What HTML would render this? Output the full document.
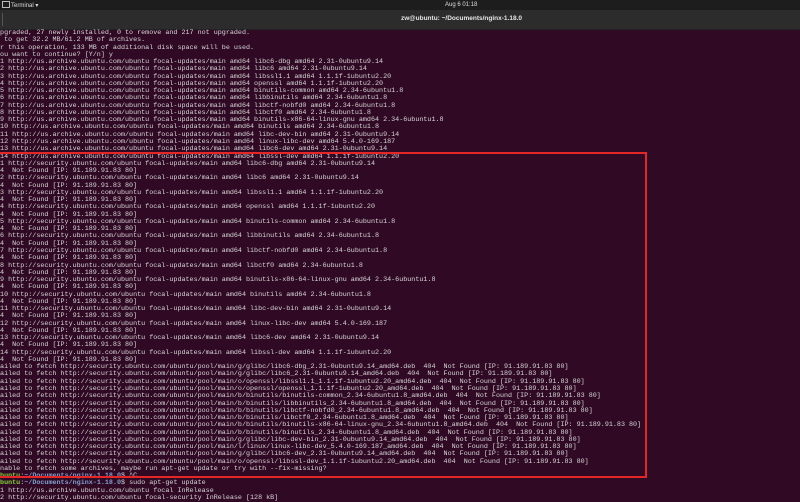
<!DOCTYPE html>
<html><head><meta charset="utf-8"><style>
html,body{margin:0;padding:0;width:800px;height:500px;overflow:hidden;background:#300a24;}
#top{position:absolute;left:0;top:0;width:800px;height:10px;background:#1d1d1d;color:#ddd;font:6px "Liberation Sans",sans-serif;}
#title{position:absolute;left:0;top:10px;width:800px;height:19px;background:#2c2c2c;border-bottom:1px solid #222;color:#e6e6e6;font:bold 6.5px "Liberation Sans",sans-serif;}
#term{position:absolute;left:0;top:30px;width:800px;}
pre{margin:0 0 0 -16.1px;font-family:"Liberation Mono",monospace;font-size:6.72px;line-height:7.27px;color:#d6d6d6;white-space:pre;}
.g{color:#7fd63a;font-weight:bold}.b{color:#7f9fd0;font-weight:bold}
#box{position:absolute;left:-2px;top:152px;width:645px;height:322px;border:2px solid #e32626;}
</style></head><body>
<div id="top"><span style="position:absolute;left:2px;top:1px;width:6px;height:5px;border:1px solid #bbb"></span><span style="position:absolute;left:11px;top:1.5px">Terminal ▾</span><span style="position:absolute;left:445px;top:1.5px">Aug 6  01:18</span></div>
<div id="title"><span style="position:absolute;left:2px;top:3px;width:1px;height:13px;background:#555"></span><span style="position:absolute;left:401px;top:5px">zw@ubuntu: ~/Documents/nginx-1.18.0</span></div>
<div id="term"><pre>10 upgraded, 27 newly installed, 0 to remove and 217 not upgraded.
Need to get 32.2 MB/61.2 MB of archives.
After this operation, 133 MB of additional disk space will be used.
Do you want to continue? [Y/n] y
Get:1 http://us.archive.ubuntu.com/ubuntu focal-updates/main amd64 libc6-dbg amd64 2.31-0ubuntu9.14
Get:2 http://us.archive.ubuntu.com/ubuntu focal-updates/main amd64 libc6 amd64 2.31-0ubuntu9.14
Get:3 http://us.archive.ubuntu.com/ubuntu focal-updates/main amd64 libssl1.1 amd64 1.1.1f-1ubuntu2.20
Get:4 http://us.archive.ubuntu.com/ubuntu focal-updates/main amd64 openssl amd64 1.1.1f-1ubuntu2.20
Get:5 http://us.archive.ubuntu.com/ubuntu focal-updates/main amd64 binutils-common amd64 2.34-6ubuntu1.8
Get:6 http://us.archive.ubuntu.com/ubuntu focal-updates/main amd64 libbinutils amd64 2.34-6ubuntu1.8
Get:7 http://us.archive.ubuntu.com/ubuntu focal-updates/main amd64 libctf-nobfd0 amd64 2.34-6ubuntu1.8
Get:8 http://us.archive.ubuntu.com/ubuntu focal-updates/main amd64 libctf0 amd64 2.34-6ubuntu1.8
Get:9 http://us.archive.ubuntu.com/ubuntu focal-updates/main amd64 binutils-x86-64-linux-gnu amd64 2.34-6ubuntu1.8
Get:10 http://us.archive.ubuntu.com/ubuntu focal-updates/main amd64 binutils amd64 2.34-6ubuntu1.8
Get:11 http://us.archive.ubuntu.com/ubuntu focal-updates/main amd64 libc-dev-bin amd64 2.31-0ubuntu9.14
Get:12 http://us.archive.ubuntu.com/ubuntu focal-updates/main amd64 linux-libc-dev amd64 5.4.0-169.187
Get:13 http://us.archive.ubuntu.com/ubuntu focal-updates/main amd64 libc6-dev amd64 2.31-0ubuntu9.14
Get:14 http://us.archive.ubuntu.com/ubuntu focal-updates/main amd64 libssl-dev amd64 1.1.1f-1ubuntu2.20
Err:1 http://security.ubuntu.com/ubuntu focal-updates/main amd64 libc6-dbg amd64 2.31-0ubuntu9.14
  404  Not Found [IP: 91.189.91.83 80]
Err:2 http://security.ubuntu.com/ubuntu focal-updates/main amd64 libc6 amd64 2.31-0ubuntu9.14
  404  Not Found [IP: 91.189.91.83 80]
Err:3 http://security.ubuntu.com/ubuntu focal-updates/main amd64 libssl1.1 amd64 1.1.1f-1ubuntu2.20
  404  Not Found [IP: 91.189.91.83 80]
Err:4 http://security.ubuntu.com/ubuntu focal-updates/main amd64 openssl amd64 1.1.1f-1ubuntu2.20
  404  Not Found [IP: 91.189.91.83 80]
Err:5 http://security.ubuntu.com/ubuntu focal-updates/main amd64 binutils-common amd64 2.34-6ubuntu1.8
  404  Not Found [IP: 91.189.91.83 80]
Err:6 http://security.ubuntu.com/ubuntu focal-updates/main amd64 libbinutils amd64 2.34-6ubuntu1.8
  404  Not Found [IP: 91.189.91.83 80]
Err:7 http://security.ubuntu.com/ubuntu focal-updates/main amd64 libctf-nobfd0 amd64 2.34-6ubuntu1.8
  404  Not Found [IP: 91.189.91.83 80]
Err:8 http://security.ubuntu.com/ubuntu focal-updates/main amd64 libctf0 amd64 2.34-6ubuntu1.8
  404  Not Found [IP: 91.189.91.83 80]
Err:9 http://security.ubuntu.com/ubuntu focal-updates/main amd64 binutils-x86-64-linux-gnu amd64 2.34-6ubuntu1.8
  404  Not Found [IP: 91.189.91.83 80]
Err:10 http://security.ubuntu.com/ubuntu focal-updates/main amd64 binutils amd64 2.34-6ubuntu1.8
  404  Not Found [IP: 91.189.91.83 80]
Err:11 http://security.ubuntu.com/ubuntu focal-updates/main amd64 libc-dev-bin amd64 2.31-0ubuntu9.14
  404  Not Found [IP: 91.189.91.83 80]
Err:12 http://security.ubuntu.com/ubuntu focal-updates/main amd64 linux-libc-dev amd64 5.4.0-169.187
  404  Not Found [IP: 91.189.91.83 80]
Err:13 http://security.ubuntu.com/ubuntu focal-updates/main amd64 libc6-dev amd64 2.31-0ubuntu9.14
  404  Not Found [IP: 91.189.91.83 80]
Err:14 http://security.ubuntu.com/ubuntu focal-updates/main amd64 libssl-dev amd64 1.1.1f-1ubuntu2.20
  404  Not Found [IP: 91.189.91.83 80]
E: Failed to fetch http://security.ubuntu.com/ubuntu/pool/main/g/glibc/libc6-dbg_2.31-0ubuntu9.14_amd64.deb  404  Not Found [IP: 91.189.91.83 80]
E: Failed to fetch http://security.ubuntu.com/ubuntu/pool/main/g/glibc/libc6_2.31-0ubuntu9.14_amd64.deb  404  Not Found [IP: 91.189.91.83 80]
E: Failed to fetch http://security.ubuntu.com/ubuntu/pool/main/o/openssl/libssl1.1_1.1.1f-1ubuntu2.20_amd64.deb  404  Not Found [IP: 91.189.91.83 80]
E: Failed to fetch http://security.ubuntu.com/ubuntu/pool/main/o/openssl/openssl_1.1.1f-1ubuntu2.20_amd64.deb  404  Not Found [IP: 91.189.91.83 80]
E: Failed to fetch http://security.ubuntu.com/ubuntu/pool/main/b/binutils/binutils-common_2.34-6ubuntu1.8_amd64.deb  404  Not Found [IP: 91.189.91.83 80]
E: Failed to fetch http://security.ubuntu.com/ubuntu/pool/main/b/binutils/libbinutils_2.34-6ubuntu1.8_amd64.deb  404  Not Found [IP: 91.189.91.83 80]
E: Failed to fetch http://security.ubuntu.com/ubuntu/pool/main/b/binutils/libctf-nobfd0_2.34-6ubuntu1.8_amd64.deb  404  Not Found [IP: 91.189.91.83 80]
E: Failed to fetch http://security.ubuntu.com/ubuntu/pool/main/b/binutils/libctf0_2.34-6ubuntu1.8_amd64.deb  404  Not Found [IP: 91.189.91.83 80]
E: Failed to fetch http://security.ubuntu.com/ubuntu/pool/main/b/binutils/binutils-x86-64-linux-gnu_2.34-6ubuntu1.8_amd64.deb  404  Not Found [IP: 91.189.91.83 80]
E: Failed to fetch http://security.ubuntu.com/ubuntu/pool/main/b/binutils/binutils_2.34-6ubuntu1.8_amd64.deb  404  Not Found [IP: 91.189.91.83 80]
E: Failed to fetch http://security.ubuntu.com/ubuntu/pool/main/g/glibc/libc-dev-bin_2.31-0ubuntu9.14_amd64.deb  404  Not Found [IP: 91.189.91.83 80]
E: Failed to fetch http://security.ubuntu.com/ubuntu/pool/main/l/linux/linux-libc-dev_5.4.0-169.187_amd64.deb  404  Not Found [IP: 91.189.91.83 80]
E: Failed to fetch http://security.ubuntu.com/ubuntu/pool/main/g/glibc/libc6-dev_2.31-0ubuntu9.14_amd64.deb  404  Not Found [IP: 91.189.91.83 80]
E: Failed to fetch http://security.ubuntu.com/ubuntu/pool/main/o/openssl/libssl-dev_1.1.1f-1ubuntu2.20_amd64.deb  404  Not Found [IP: 91.189.91.83 80]
E: Unable to fetch some archives, maybe run apt-get update or try with --fix-missing?
<span class="g">zw@ubuntu</span>:<span class="b">~/Documents/nginx-1.18.0</span>$ ^C
<span class="g">zw@ubuntu</span>:<span class="b">~/Documents/nginx-1.18.0</span>$ sudo apt-get update
Hit:1 http://us.archive.ubuntu.com/ubuntu focal InRelease
Get:2 http://security.ubuntu.com/ubuntu focal-security InRelease [128 kB]
</pre></div>
<div id="box"></div>
</body></html>
